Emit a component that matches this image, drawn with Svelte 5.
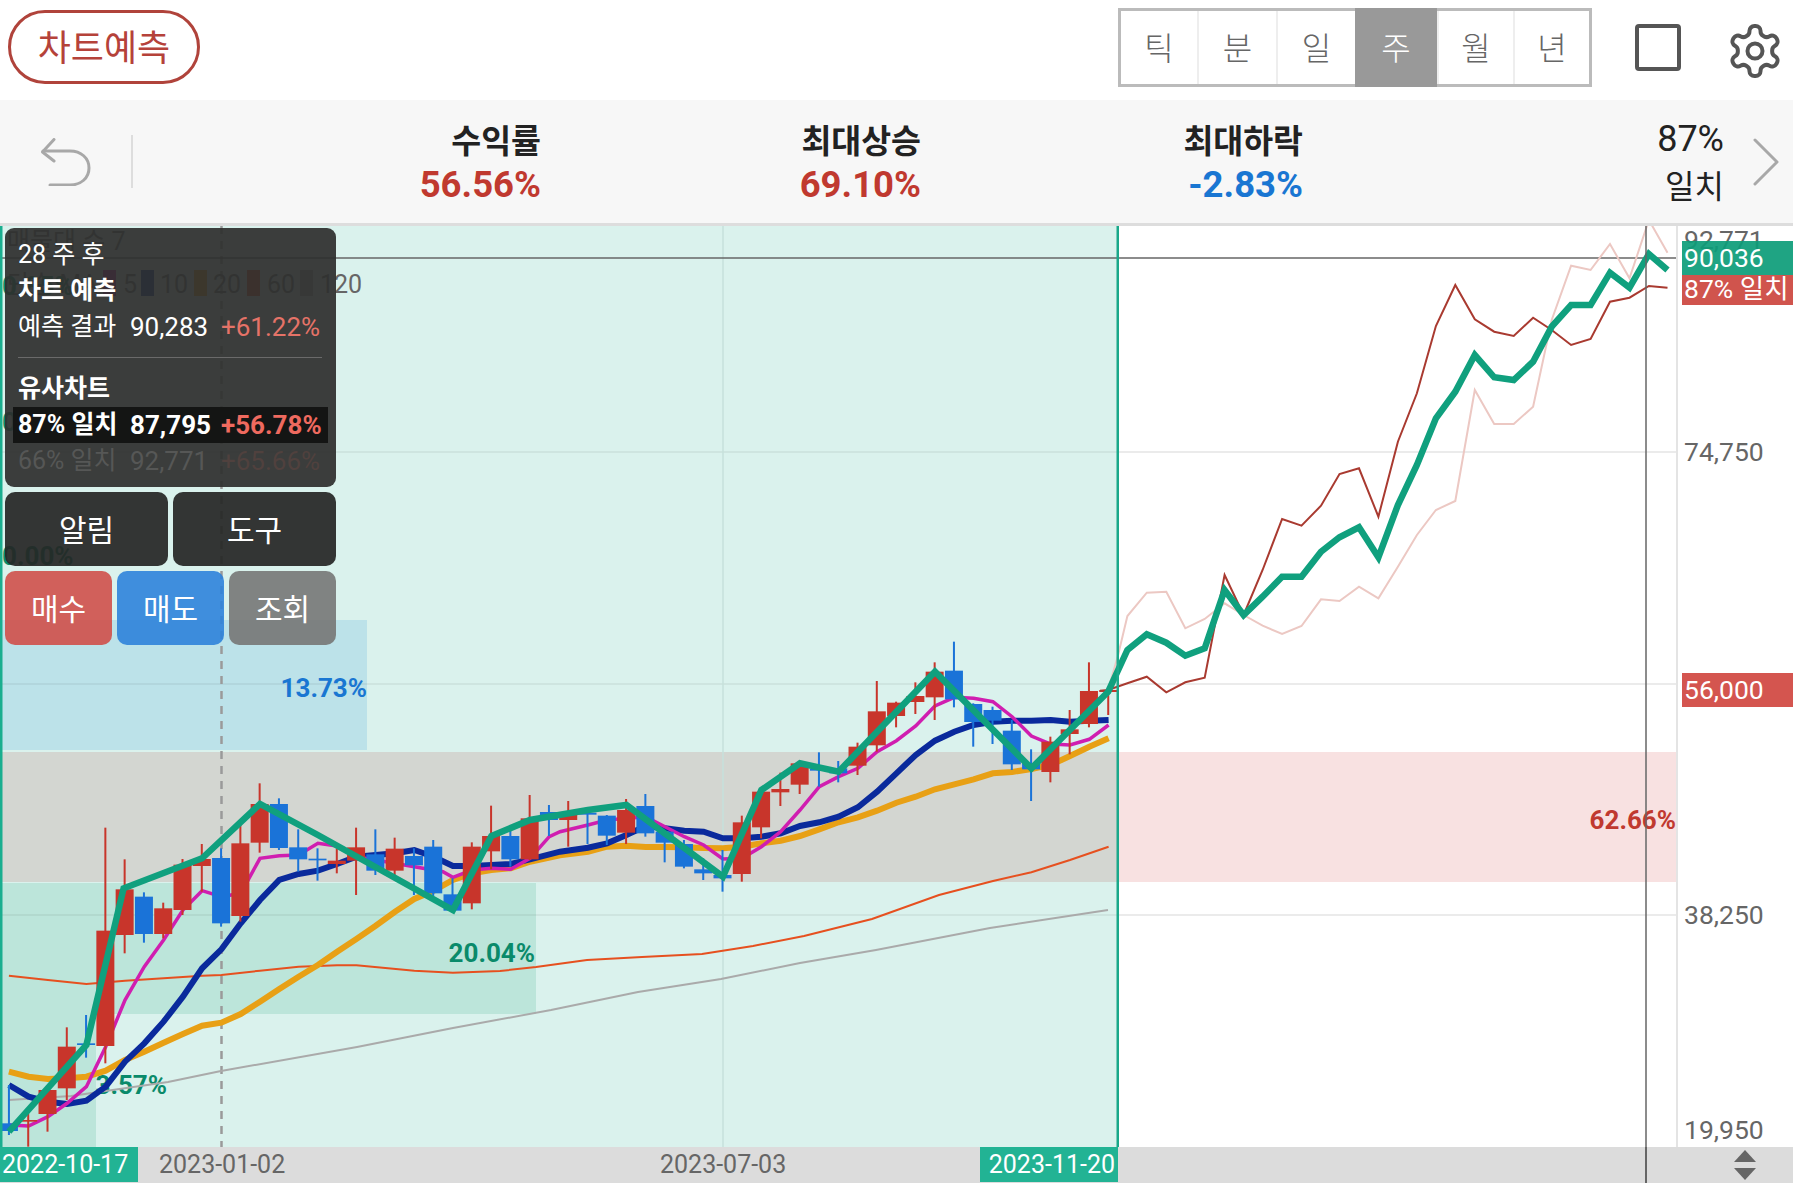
<script>
	// chart values were read off 3x crops, so each series keeps its crop origin
	const left = (list) => list.map(([x, y]) => [x / 2.8, 760 + y / 3]);
	const mid = (list) => list.map(([x, y]) => [560 + x / 2.8, 620 + y / 3]);
	const right = (list) => list.map(([x, y]) => [1100 + x / 2.2626, 220 + y / 3]);
	const pts = (list) => list.map(([x, y]) => `${x.toFixed(1)},${y.toFixed(1)}`).join(' ');

	const r = 'r';
	const b = 'b';
	const earlyCandles = [
		[1090, 1113, 975, 1125, b], [1080, 1085, 1060, 1160, r], [990, 1062, 985, 1115, r], [860, 985, 802, 1020, r],
		[850, 855, 765, 893, b], [512, 858, 203, 910, r], [388, 525, 298, 580, r], [410, 522, 397, 548, b],
		[445, 522, 428, 535, r], [314, 450, 297, 465, r], [297, 318, 252, 395, r], [294, 490, 265, 500, b],
		[250, 468, 195, 485, r], [132, 248, 70, 278, r], [132, 264, 115, 270, b], [262, 298, 208, 335, b],
		[296, 301, 265, 362, b], [302, 312, 265, 340, r], [262, 302, 203, 405, r], [283, 332, 208, 345, b],
		[266, 332, 233, 350, r], [288, 316, 265, 405, b], [260, 400, 240, 408, b], [403, 452, 355, 458, b],
		[260, 430, 247, 448, r], [228, 274, 137, 328, r], [228, 298, 205, 320, b], [175, 298, 105, 300, r],
		[156, 180, 135, 228, b]
	];
	const lateCandles = [
		[585, 600, 543, 680, r], [578, 584, 575, 672, b], [587, 647, 585, 675, b], [570, 638, 537, 672, r],
		[558, 640, 522, 650, b], [635, 668, 630, 727, b], [672, 740, 660, 745, b], [748, 760, 715, 780, b],
		[765, 775, 690, 815, b], [607, 762, 587, 785, r], [515, 622, 510, 655, r], [507, 517, 458, 558, r],
		[430, 494, 425, 522, r], [447, 452, 397, 500, b], [445, 460, 423, 487, b], [380, 437, 368, 465, r],
		[274, 376, 183, 395, r], [248, 288, 245, 322, r], [228, 246, 187, 282, r], [155, 232, 127, 300, r],
		[152, 238, 65, 262, b], [252, 306, 250, 380, b], [270, 302, 260, 372, b], [332, 433, 300, 450, b],
		[430, 448, 388, 543, b], [365, 456, 350, 487, r], [328, 342, 270, 403, r], [213, 312, 127, 322, r],
		[210, 216, 205, 285, r]
	];

	const candles = [
		...earlyCandles.map((c) => ({ c, base: 760 })),
		...lateCandles.map((c) => ({ c, base: 620 }))
	].map(({ c, base }, i) => ({
		x: 8.93 + 19.286 * i,
		top: base + c[0] / 3,
		bottom: base + c[1] / 3,
		high: base + c[2] / 3,
		low: base + c[3] / 3,
		up: c[4] === r
	}));

	const ma5 = [
		...left([[25, 1095], [80, 1098], [134, 1070], [188, 1030], [242, 980], [296, 860], [350, 720], [404, 620], [458, 540], [512, 450], [566, 392], [620, 410], [674, 400], [728, 295], [782, 287], [836, 285], [890, 250], [944, 258], [998, 290], [1052, 300], [1240, 335], [1268, 352], [1322, 330], [1376, 325], [1430, 328], [1484, 295], [1538, 230]]),
		...mid([[0, 635], [78, 615], [132, 600], [240, 590], [294, 620], [348, 650], [402, 675], [456, 717], [510, 715], [564, 680], [618, 635], [672, 570], [726, 500], [780, 470], [834, 445], [888, 395], [942, 362], [996, 318], [1050, 258], [1104, 232], [1158, 235], [1212, 245], [1266, 290], [1320, 348], [1374, 372], [1428, 375], [1482, 358], [1536, 315]])
	];
	const ma10 = [
		...left([[25, 975], [80, 1010], [134, 1025], [188, 1032], [242, 1022], [296, 980], [350, 905], [404, 850], [458, 785], [512, 710], [566, 625], [620, 568], [674, 490], [728, 420], [782, 360], [836, 342], [890, 332], [944, 312], [998, 290], [1052, 285], [1106, 280], [1160, 270], [1214, 290], [1268, 318], [1322, 318], [1376, 315], [1430, 312], [1484, 298]]),
		...mid([[0, 695], [78, 683], [132, 670], [186, 645], [240, 618], [294, 625], [348, 632], [402, 635], [456, 655], [510, 655], [564, 650], [618, 640], [672, 618], [726, 607], [780, 590], [834, 562], [888, 515], [942, 460], [996, 405], [1050, 362], [1104, 335], [1158, 315], [1212, 305], [1266, 302], [1320, 302], [1374, 300], [1428, 305], [1482, 302], [1536, 300]])
	];
	const ma20 = [
		...left([[25, 935], [80, 950], [134, 957], [188, 955], [242, 950], [296, 932], [350, 900], [404, 875], [458, 848], [512, 822], [566, 797], [620, 788], [674, 762], [728, 725], [782, 687], [836, 650], [890, 615], [944, 575], [998, 537], [1052, 497], [1106, 455], [1160, 417], [1214, 392], [1268, 360], [1322, 340], [1376, 330], [1430, 325], [1484, 305]]),
		...mid([[0, 706], [78, 695], [132, 680], [186, 677], [240, 681], [294, 681], [348, 682], [402, 684], [456, 685], [510, 680], [564, 670], [618, 662], [672, 648], [726, 628], [780, 607], [834, 592], [888, 572], [942, 548], [996, 530], [1050, 508], [1104, 493], [1158, 478], [1212, 460], [1266, 456], [1320, 447], [1374, 435], [1428, 408], [1482, 380], [1536, 355]])
	];
	const ma60 = [
		...left([[25, 647], [134, 660], [242, 672], [350, 662], [458, 655], [566, 647], [620, 645], [728, 632], [836, 620], [944, 616], [998, 616], [1160, 632], [1268, 638]]),
		[500, 971], [536, 967], [587, 960], [642, 957], [702, 954], [753, 946], [804, 936], [872, 919], [939, 895], [993, 881],
		...mid([[1320, 757], [1428, 720], [1536, 680]])
	];
	const ma120 = [[9, 1100], [71, 1096], [168, 1082], [221, 1071], [357, 1047], [453, 1028], [551, 1010], [638, 992], [721, 979], [800, 963], [876, 950], [990, 928], [1108, 910]];

	const forecast = [
		...left([[25, 1115], [242, 855], [346, 385], [566, 295], [728, 132], [890, 225], [1268, 450], [1376, 228], [1484, 180]]),
		...mid([[78, 570], [186, 555], [456, 770], [564, 510], [672, 430], [780, 455], [1050, 155], [1320, 445], [1535, 215]]),
		...right([[62, 1290], [106, 1243], [150, 1268], [193, 1307], [237, 1285], [282, 1110], [325, 1185], [368, 1130], [412, 1070], [456, 1070], [500, 995], [542, 952], [586, 922], [630, 1012], [674, 855], [717, 735], [760, 595], [804, 515], [848, 405], [892, 472], [936, 480], [980, 425], [1022, 320], [1066, 255], [1110, 255], [1154, 158], [1198, 203], [1242, 102], [1284, 150]])
	];
	const match87 = right([[0, 1412], [18, 1410], [62, 1390], [106, 1370], [150, 1417], [193, 1387], [237, 1373], [282, 1065], [325, 1185], [368, 1050], [412, 897], [456, 917], [500, 857], [542, 762], [586, 745], [630, 890], [674, 665], [717, 520], [760, 318], [804, 195], [848, 298], [892, 335], [936, 348], [980, 293], [1022, 330], [1066, 375], [1110, 357], [1154, 245], [1198, 233], [1242, 198], [1284, 203]]);
	const match66 = right([[18, 1410], [40, 1310], [62, 1188], [106, 1118], [150, 1115], [193, 1225], [237, 1197], [282, 1150], [325, 1185], [368, 1217], [412, 1242], [456, 1218], [500, 1138], [542, 1143], [586, 1100], [630, 1135], [674, 1040], [717, 945], [760, 870], [804, 843], [848, 510], [892, 612], [936, 612], [980, 560], [1022, 300], [1066, 137], [1110, 150], [1154, 72], [1198, 175], [1242, 0], [1284, 98]]);

	const grid = [452, 684, 915];
	const legend = [
		{ x: 103, color: '#c01aa0', label: '5', tx: 123 },
		{ x: 141, color: '#0a2a9c', label: '10', tx: 160 },
		{ x: 194, color: '#e8a015', label: '20', tx: 213 },
		{ x: 247, color: '#d84a20', label: '60', tx: 267 },
		{ x: 300, color: '#aaaaaa', label: '120', tx: 320 }
	];
	const periods = ['틱', '분', '일', '주', '월', '년'];
	const stats = [
		{ label: '수익률', value: '56.56%', tone: 'up', width: 408 },
		{ label: '최대상승', value: '69.10%', tone: 'up', width: 380 },
		{ label: '최대하락', value: '-2.83%', tone: 'down', width: 382 }
	];
</script>

<div class="app">
	<header class="topbar">
		<button class="predict" type="button">차트예측</button>
		<div class="tools">
			<div class="periods">
				{#each periods as p}
					<span class="period" class:active={p === '주'}>{p}</span>
				{/each}
			</div>
			<span class="square"></span>
			<svg class="gear" viewBox="0 0 24 24" fill="none" stroke="#555" stroke-width="1.6" aria-hidden="true">
				<path d="M12.22 2h-.44a2 2 0 0 0-2 2v.18a2 2 0 0 1-1 1.73l-.43.25a2 2 0 0 1-2 0l-.15-.08a2 2 0 0 0-2.73.73l-.22.38a2 2 0 0 0 .73 2.73l.15.1a2 2 0 0 1 1 1.72v.51a2 2 0 0 1-1 1.74l-.15.09a2 2 0 0 0-.73 2.73l.22.38a2 2 0 0 0 2.73.73l.15-.08a2 2 0 0 1 2 0l.43.25a2 2 0 0 1 1 1.73V20a2 2 0 0 0 2 2h.44a2 2 0 0 0 2-2v-.18a2 2 0 0 1 1-1.73l.43-.25a2 2 0 0 1 2 0l.15.08a2 2 0 0 0 2.73-.73l.22-.39a2 2 0 0 0-.73-2.73l-.15-.08a2 2 0 0 1-1-1.74v-.5a2 2 0 0 1 1-1.74l.15-.09a2 2 0 0 0 .73-2.73l-.22-.38a2 2 0 0 0-2.73-.73l-.15.08a2 2 0 0 1-2 0l-.43-.25a2 2 0 0 1-1-1.73V4a2 2 0 0 0-2-2z" />
				<circle cx="12" cy="12" r="3" />
			</svg>
		</div>
	</header>

	<section class="stats">
		<svg class="undo" viewBox="0 0 50 48" fill="none" stroke="#a8a8a8" stroke-width="3" stroke-linecap="round" stroke-linejoin="round" aria-hidden="true">
			<path d="M13 1.5 1.5 14 13 23" />
			<path d="M2 13h27c11 0 19 7 19 17s-8 17-19 17H9" />
		</svg>
		<span class="rule"></span>
		{#each stats as s}
			<div class="stat" style="width: {s.width}px">
				<div class="stat-label">{s.label}</div>
				<div class="stat-value {s.tone}">{s.value}</div>
			</div>
		{/each}
		<div class="match">
			<div class="match-pct">87%</div>
			<div class="match-text">일치</div>
		</div>
		<svg class="next" viewBox="0 0 26 48" fill="none" stroke="#a8a8a8" stroke-width="3" stroke-linecap="round" stroke-linejoin="round" aria-hidden="true">
			<path d="M2 2 24 24 2 46" />
		</svg>
	</section>

	<main class="chart">
		<svg class="plot" viewBox="0 226 1793 921" aria-hidden="true">
			<defs>
				<clipPath id="plot-area"><rect x="0" y="226" width="1677" height="921" /></clipPath>
			</defs>
			<rect x="0" y="226" width="1118" height="921" fill="#daf2ed" />
			<rect x="0" y="620" width="367" height="130" fill="#bce2e9" />
			<rect x="0" y="752" width="1118" height="130" fill="#d3d6d1" />
			<rect x="1118" y="752" width="559" height="130" fill="#f8e1e1" />
			<rect x="0" y="883" width="536" height="131" fill="#bce5da" />
			<rect x="0" y="1014" width="96" height="133" fill="#bce5da" />

			{#each grid as y}
				<line x1="0" x2="1118" y1={y} y2={y} stroke="#000" stroke-opacity="0.07" stroke-width="1.5" />
				<line x1="1118" x2="1677" y1={y} y2={y} stroke="#e4e4e4" stroke-width="1.5" />
			{/each}
			<line x1="723" x2="723" y1="226" y2="1147" stroke="#c6e0db" stroke-width="1.5" />
			<line x1="221.5" x2="221.5" y1="226" y2="1147" stroke="#9a9a9a" stroke-width="2.5" stroke-dasharray="8 7" />

			<text class="ghost" x="7" y="250">매물대 수 7</text>
			<text class="ghost" x="7" y="293">단순 MA</text>
			{#each legend as item}
				<rect x={item.x} y="270" width="13" height="26" fill={item.color} />
				<text class="ghost" x={item.tx} y="293">{item.label}</text>
			{/each}
			<text class="zone green" x="2" y="295">0.85%</text>
			<text class="zone green" x="2" y="431">0.26%</text>
			<text class="zone green" x="2" y="565">0.00%</text>
			<text class="zone blue" x="367" y="697" text-anchor="end">13.73%</text>
			<text class="zone green" x="535" y="962" text-anchor="end">20.04%</text>
			<text class="zone green" x="167" y="1094" text-anchor="end">3.57%</text>
			<text class="zone red" x="1676" y="829" text-anchor="end">62.66%</text>

			<polyline class="ma" points={pts(ma120)} stroke="#aaaaaa" stroke-width="2" />
			<polyline class="ma" points={pts(ma60)} stroke="#e6501f" stroke-width="2" />
			<polyline class="ma" points={pts(ma20)} stroke="#e8a015" stroke-width="6" />
			<polyline class="ma" points={pts(ma10)} stroke="#0a2a9c" stroke-width="6" />
			<polyline class="ma" points={pts(ma5)} stroke="#d01eb0" stroke-width="3.5" />
			{#each candles as c}
				<g fill={c.up ? '#c8352b' : '#1a73d8'}>
					<rect x={c.x - 1} y={c.high} width="2" height={c.low - c.high} />
					<rect x={c.x - 9} y={c.top} width="18" height={c.bottom - c.top} />
				</g>
			{/each}

			<line x1="0" x2="1677" y1="258" y2="258" stroke="#666" stroke-width="1.5" />
			<g clip-path="url(#plot-area)">
				<polyline class="ma" points={pts(match66)} stroke="#ecc8c3" stroke-width="2" />
				<polyline class="ma" points={pts(match87)} stroke="#a93a30" stroke-width="2" />
				<polyline class="ma" points={pts(forecast)} stroke="#10a07e" stroke-width="6.5" />
			</g>

			<rect x="0" y="226" width="2.5" height="921" fill="#1aae8f" />
			<rect x="1116.5" y="226" width="2.5" height="921" fill="#1aa88a" />
			<rect x="1676" y="226" width="2" height="921" fill="#e4e4e4" />
			<line x1="1646" x2="1646" y1="226" y2="1147" stroke="#666" stroke-width="1.5" />

			<text class="price" x="1684" y="249">92,771</text>
			<text class="price" x="1684" y="461">74,750</text>
			<text class="price" x="1684" y="924">38,250</text>
			<text class="price" x="1684" y="1139">19,950</text>
			<rect x="1682" y="241" width="111" height="34" fill="#0c9c78" fill-opacity="0.92" />
			<text class="price tag" x="1684" y="267">90,036</text>
			<rect x="1682" y="275" width="111" height="30" fill="#d0544d" />
			<text class="price tag" x="1684" y="298">87% 일치</text>
			<rect x="1682" y="673" width="111" height="34" fill="#d4554f" />
			<text class="price tag" x="1684" y="699">56,000</text>
		</svg>

		<div class="overlay">
			<div class="panel">
				<div class="line">28 주 후</div>
				<div class="line strong">차트 예측</div>
				<div class="row">
					<span class="name">예측 결과</span><span class="num">90,283</span><span class="pct">+61.22%</span>
				</div>
				<div class="divider"></div>
				<div class="line strong">유사차트</div>
				<div class="row selected">
					<span class="name">87% 일치</span><span class="num">87,795</span><span class="pct">+56.78%</span>
				</div>
				<div class="row dim">
					<span class="name">66% 일치</span><span class="num">92,771</span><span class="pct">+65.66%</span>
				</div>
			</div>
			<div class="actions">
				<button class="action" type="button">알림</button>
				<button class="action" type="button">도구</button>
			</div>
			<div class="actions">
				<button class="action buy" type="button">매수</button>
				<button class="action sell" type="button">매도</button>
				<button class="action view" type="button">조회</button>
			</div>
		</div>
	</main>

	<footer class="axis">
		<span class="date flag" style="left: 0; width: 138px">2022-10-17</span>
		<span class="date" style="left: 159px">2023-01-02</span>
		<span class="date" style="left: 660px">2023-07-03</span>
		<span class="date flag end" style="left: 980px; width: 138px">2023-11-20</span>
		<span class="cross"></span>
		<span class="arrows"><i class="tri"></i><i class="tri flip"></i></span>
	</footer>
</div>

<style>
	:global(body) {
		margin: 0;
		background: #fff;
	}

	.app {
		width: 1793px;
		height: 1183px;
		display: flex;
		flex-direction: column;
		overflow: hidden;
		background: #fff;
		font-family: Roboto, "Noto Sans CJK KR", sans-serif;
	}

	.topbar {
		height: 100px;
		flex: none;
		display: flex;
		justify-content: space-between;
		align-items: flex-start;
		box-sizing: border-box;
		padding: 8px 8px 0 8px;
	}

	.predict {
		width: 192px;
		height: 74px;
		margin-top: 2px;
		box-sizing: border-box;
		border: 3px solid #b0433b;
		border-radius: 37px;
		background: #fff;
		color: #b5423a;
		font: 400 36px/1 "Noto Sans CJK KR", sans-serif;
		padding: 0 0 4px;
	}

	.tools {
		display: flex;
		align-items: flex-start;
	}

	.periods {
		display: grid;
		grid-template-columns: 76px 79px 79px 82px 76px 76px;
		width: 474px;
		height: 79px;
		box-sizing: border-box;
		border: 3px solid #bbb;
	}

	.period {
		display: flex;
		align-items: center;
		justify-content: center;
		color: #666;
		font: 300 32px/1 "Noto Sans CJK KR", sans-serif;
		border-left: 2px solid #eee;
		padding-bottom: 4px;
	}

	.period:first-child {
		border-left: 0;
	}

	.period.active {
		background: #999;
		color: #fff;
		margin: -3px 0;
		border-left: 0;
	}

	.square {
		width: 46px;
		height: 47px;
		margin: 16px 0 0 43px;
		box-sizing: border-box;
		border: 4px solid #555;
		border-radius: 4px;
	}

	.gear {
		width: 60px;
		height: 60px;
		margin: 13px 0 0 44px;
	}

	.stats {
		height: 126px;
		flex: none;
		box-sizing: border-box;
		display: flex;
		align-items: flex-start;
		background: #f7f7f7;
		border-bottom: 3px solid #ddd;
		padding-top: 18px;
	}

	.undo {
		width: 50px;
		height: 48px;
		margin: 20px 0 0 41px;
		flex: none;
	}

	.rule {
		width: 2px;
		height: 53px;
		margin: 17px 0 0 40px;
		background: #ddd;
		flex: none;
	}

	.stat {
		flex: none;
		text-align: right;
	}

	.stat-label {
		color: #222;
		font: 700 32.5px/42px "Noto Sans CJK KR", sans-serif;
	}

	.stat-value {
		font: 700 36.5px/50px Roboto, sans-serif;
	}

	.up {
		color: #c0392f;
	}

	.down {
		color: #1976d2;
	}

	.match {
		width: 421px;
		flex: none;
		text-align: right;
		color: #222;
	}

	.match-pct {
		font: 400 36px/42px Roboto, sans-serif;
	}

	.match-text {
		font: 400 32px/44px "Noto Sans CJK KR", sans-serif;
		margin-top: 2px;
	}

	.next {
		width: 26px;
		height: 48px;
		margin: 20px 0 0 29px;
		flex: none;
	}

	.chart {
		position: relative;
		flex: 1;
		min-height: 0;
	}

	.plot {
		display: block;
		width: 1793px;
		height: 921px;
	}

	.ma {
		fill: none;
		stroke-linejoin: miter;
	}

	.ghost {
		font: 400 25px Roboto, "Noto Sans CJK KR", sans-serif;
		fill: #666;
	}

	.zone {
		font: 700 26px Roboto, sans-serif;
	}

	.green {
		fill: #0a8a6a;
	}

	.blue {
		fill: #1976d2;
	}

	.red {
		fill: #c0392f;
	}

	.price {
		font: 400 26.5px Roboto, "Noto Sans CJK KR", sans-serif;
		fill: #666;
	}

	.tag {
		fill: #fff;
	}

	.overlay {
		position: absolute;
		left: 5px;
		top: 2px;
		width: 331px;
		display: flex;
		flex-direction: column;
		gap: 5px;
	}

	.panel {
		height: 259px;
		box-sizing: border-box;
		padding: 9px 8px 0;
		background: rgba(46, 47, 46, 0.93);
		border-radius: 9px;
		color: #fff;
		font-size: 26px;
	}

	.line {
		height: 36px;
		line-height: 36px;
		padding-left: 5px;
		font-size: 25px;
	}

	.strong {
		font-weight: 700;
	}

	.row {
		display: flex;
		height: 36px;
		line-height: 36px;
		padding-left: 5px;
		white-space: nowrap;
	}

	.name {
		width: 112px;
		flex: none;
		font-size: 25px;
	}

	.num {
		width: 91px;
		flex: none;
	}

	.pct {
		color: #e57368;
	}

	.divider {
		height: 1px;
		margin: 12px 6px 13px 5px;
		background: #6a6a6a;
	}

	.selected {
		background: #141514;
		font-weight: 700;
	}

	.selected .pct {
		color: #ef6a5f;
	}

	.dim {
		color: #565756;
	}

	.dim .pct {
		color: #50413e;
	}

	.actions {
		display: flex;
		gap: 5px;
		height: 74px;
	}

	.action {
		flex: 1;
		border: 0;
		padding: 0 0 3px;
		border-radius: 10px;
		background: rgba(38, 39, 38, 0.93);
		color: #fff;
		font: 400 30px/1 "Noto Sans CJK KR", sans-serif;
	}

	.buy {
		background: rgba(207, 80, 74, 0.9);
	}

	.sell {
		background: rgba(46, 131, 218, 0.9);
	}

	.view {
		background: rgba(117, 119, 117, 0.9);
	}

	.axis {
		position: relative;
		height: 36px;
		flex: none;
		background: #dcdcdc;
	}

	.date {
		position: absolute;
		top: 0;
		height: 35px;
		line-height: 35px;
		color: #666;
		font-size: 25px;
	}

	.flag {
		background: #22b394;
		color: #fff;
		box-sizing: border-box;
		padding-left: 2px;
	}

	.flag.end {
		text-align: right;
		padding: 0 3px 0 0;
	}

	.cross {
		position: absolute;
		left: 1645px;
		top: 0;
		bottom: 0;
		width: 1.5px;
		background: #666;
	}

	.arrows {
		position: absolute;
		left: 1734px;
		top: 3px;
		display: flex;
		flex-direction: column;
		gap: 6px;
	}

	.tri {
		width: 0;
		height: 0;
		border-left: 11px solid transparent;
		border-right: 11px solid transparent;
		border-bottom: 12px solid #666;
	}

	.tri.flip {
		transform: rotate(180deg);
	}
</style>
